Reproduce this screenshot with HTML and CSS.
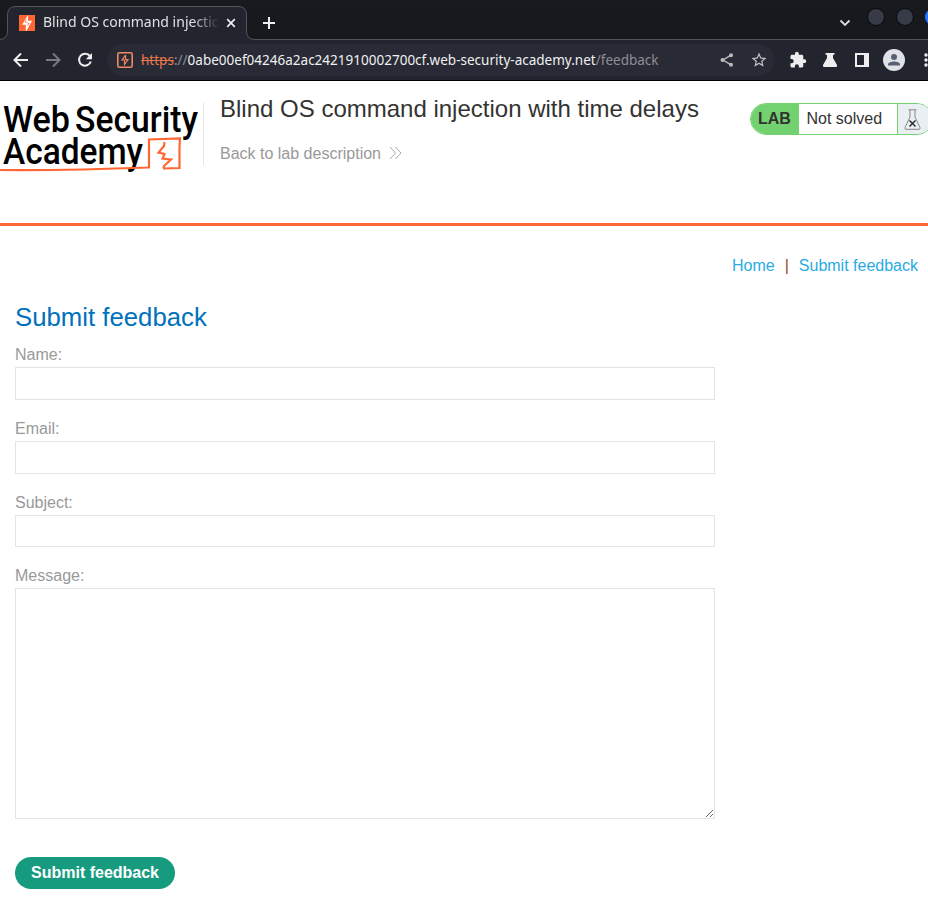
FILE: index.html
```html
<!DOCTYPE html>
<html lang="en">
<head>
<meta charset="utf-8">
<title>Blind OS command injection with time delays</title>
<link rel="stylesheet" href="styles.css">
</head>
<body>
<div class="browser">
  <div class="tabstrip">
    <svg class="tab-shape" width="928" height="41" viewBox="0 0 928 41"><path d="M-1 39.5Q7.500 39.500 7.500 31V15Q7.500 6.500 16 6.500H238Q246.500 6.500 246.500 15V31Q246.500 39.500 255 39.500H929V42H-1Z" fill="#23252e" stroke="#53555e"/></svg>
    <div class="tab">
      <svg width="16" height="16" viewBox="0 0 16 16"><path d="M0 0H16V16H0Z" fill="#ff6633"/><path d="M9 0V5.800H13L7.500 16H6.800V9.800H3.200Z" fill="#fff"/><path d="M7.400 3.500L5.800 7.400H9L8.600 11.500L10.500 8H7Z" fill="#ff6633"/></svg>
      <span class="tab-title">Blind OS command injectio</span>
      <svg class="tab-close" width="10" height="10" viewBox="0 0 10 10"><path d="M1.200 1.200L8.800 8.800M8.800 1.200L1.200 8.800" stroke="#eee" stroke-width="1.700"/></svg>
    </div>
    <svg class="new-tab" width="12" height="12" viewBox="0 0 12 12"><path d="M6 0V12M0 6H12" stroke="#eee" stroke-width="2"/></svg>
    <svg class="chevron" width="12" height="8" viewBox="0 0 12 8"><path d="M1.500 1.500L6 6L10.500 1.500" fill="none" stroke="#ddd" stroke-width="1.800"/></svg>
    <i class="win"></i><i class="win"></i><i class="win close"></i>
  </div>
  <div class="toolbar">
    <svg class="nav" width="16" height="16" viewBox="0 0 16 16"><path d="M15 8H2M8 1.500L1.500 8L8 14.500" fill="none" stroke="#eee" stroke-width="2"/></svg>
    <svg class="nav" width="16" height="16" viewBox="0 0 16 16"><path d="M1 8H14M8 1.500L14.500 8L8 14.500" fill="none" stroke="#777982" stroke-width="2"/></svg>
    <svg class="nav" width="16" height="16" viewBox="0 0 16 16"><path d="M13 4.200A6 6 0 1 0 13.800 9.500" fill="none" stroke="#eee" stroke-width="2"/><path d="M15 1V7.200H8.800Z" fill="#eee"/></svg>
    <div class="address">
      <svg width="16" height="16" viewBox="0 0 16 16" fill="none" stroke="#ee8963"><rect x=".8" y=".8" width="14.400" height="14.400" rx="1.500" stroke-width="1.600"/><path d="M8.500 3V7.500M8.500 3L5 8H7.500V12.500L11 7.700H8.500" stroke-width="1.200"/></svg>
      <span class="url"><s>https</s>://<b>0abe00ef04246a2ac2421910002700cf.web-security-academy.net</b>/feedback</span>
      <svg class="share" width="14" height="14" viewBox="0 0 14 14"><path d="M11 2.200L3 7L11 11.800" fill="none" stroke="#bbb" stroke-width="1.400"/><g fill="#bbb"><circle cx="11" cy="2.200" r="2"/><circle cx="2.500" cy="7" r="2"/><circle cx="11" cy="11.800" r="2"/></g></svg>
      <svg class="star" width="18" height="18" viewBox="0 0 24 24"><path fill="#c4c4c4" d="M22 9.240l-7.190-.62L12 2 9.190 8.630 2 9.240l5.460 4.730L5.820 21 12 17.270 18.180 21l-1.630-7.030L22 9.240zM12 15.400l-3.760 2.270 1-4.280-3.320-2.880 4.380-.38L12 6.100l1.710 4.040 4.380.38-3.320 2.880 1 4.280L12 15.400z"/></svg>
    </div>
    <svg class="puzzle" width="18" height="18" viewBox="0 0 24 24"><path fill="#eee" d="M20.500 11H19V7c0-1.100-.9-2-2-2h-4V3.500a2.500 2.500 0 0 0-5 0V5H4c-1.100 0-2 .9-2 2v3.800h1.500c1.500 0 2.700 1.200 2.700 2.700S5 16.200 3.500 16.200H2V20c0 1.100.9 2 2 2h3.800v-1.500c0-1.500 1.200-2.700 2.700-2.700s2.700 1.200 2.700 2.700V22H17c1.100 0 2-.9 2-2v-4h1.500a2.500 2.500 0 0 0 0-5z"/></svg>
    <svg class="flask" width="16" height="16" viewBox="0 0 16 16"><path d="M3.500 1H12.500V2.700H11V6L15 13Q15.500 15 14 15H2Q.5 15 1 13L5 6V2.700H3.500Z" fill="#eee"/></svg>
    <svg class="panel" width="14" height="14" viewBox="0 0 14 14"><path d="M0 0H14V14H0ZM2 2V12H9V2Z" fill="#eee" fill-rule="evenodd"/></svg>
    <svg class="avatar" width="22" height="22" viewBox="0 0 22 22"><circle cx="11" cy="11" r="11" fill="#dee1e6"/><circle cx="11" cy="8" r="3" fill="#566074"/><path d="M5 16.500V15.500C5 11.500 17 11.500 17 15.500V16.500Z" fill="#566074"/></svg>
    <svg class="dots" width="4" height="14" viewBox="0 0 4 14" fill="#eee"><circle cx="2" cy="2" r="1.700"/><circle cx="2" cy="7" r="1.700"/><circle cx="2" cy="12" r="1.700"/></svg>
  </div>
</div>

<header class="lab-header">
  <svg class="logo" width="203" height="92" viewBox="0 0 203 92">
    <g class="logo-text"><text x="3" y="41" textLength="67" lengthAdjust="spacingAndGlyphs">Web</text><text x="75" y="41" textLength="123" lengthAdjust="spacingAndGlyphs">Security</text><text x="3" y="73" textLength="140" lengthAdjust="spacingAndGlyphs">Academy</text></g>
    <g fill="none" stroke="#ff6633"><path d="M0 79Q70 79.500 149 76.500L149 48.500L180 47.500L179.500 56L179.500 77L163 77.500" stroke-width="2.200"/><path d="M164.500 51L164 55L158.500 61.500L164.500 63L162.500 67.500L171 68.500L164 75L163.500 77" stroke-width="2.200"/></g>
  </svg>
  <div class="title-block">
    <h2>Blind OS command injection with time delays</h2>
    <a class="back">Back to lab description<svg width="13" height="14" viewBox="0 0 13 14"><path d="M1 1L6.500 7L1 13M6.500 1L12 7L6.500 13" fill="none" stroke="#aaa"/></svg></a>
  </div>
  <div class="lab-status">
    <span class="lab">LAB</span><span class="state">Not solved</span>
    <span class="lab-flask"><svg width="17" height="21" viewBox="0 0 17 21" fill="none"><path d="M4.500 .8H12.500M6 1V8L1 18.500Q.5 20.300 2 20.300H15Q16.500 20.300 16 18.500L11 8V1" stroke="#888"/><path d="M5.500 11.500L11.500 17.500M11.500 11.500L5.500 17.500" stroke="#222" stroke-width="1.400"/></svg></span>
  </div>
</header>

<main>
  <nav class="top-links"><a>Home</a><span>|</span><a>Submit feedback</a></nav>
  <h1>Submit feedback</h1>
  <form>
    <label for="name">Name:</label><input id="name" type="text">
    <label for="email">Email:</label><input id="email" type="text">
    <label for="subject">Subject:</label><input id="subject" class="short" type="text">
    <label for="message">Message:</label><textarea id="message"></textarea>
    <button type="button">Submit feedback</button>
  </form>
</main>
</body>
</html>
```
FILE: styles.css
```css
* { box-sizing: border-box; }
html { overflow: hidden; }
body { margin: 0; height: 914px; overflow: hidden; background: #fff; color: #333332; font: 16px/20px "Liberation Sans", Arial, sans-serif; }
svg { display: block; flex: none; }

.browser { height: 81px; background: #23252e; border-bottom: 1px solid #000; font-family: "Noto Sans", sans-serif; overflow: hidden; }
.tabstrip { position: relative; display: flex; height: 40px; background: linear-gradient(#191a20, #17181c); }
.tab-shape { position: absolute; left: 0; top: 0; }
.tab { position: relative; display: flex; align-items: center; width: 240px; height: 32px; margin: 7px 0 0 7px; padding-left: 12px; }
.tab-title { width: 177px; margin: -2px 0 0 8px; overflow: hidden; white-space: nowrap; color: #e0e0e2; font-size: 14px; -webkit-mask-image: linear-gradient(90deg, #000 150px, transparent 176px); mask-image: linear-gradient(90deg, #000 150px, transparent 176px); }
.tab-close { margin-left: 6px; }
.new-tab { position: relative; margin: 17px 0 0 16px; }
.chevron { margin: 19px 14px 0 auto; }
.win { flex: none; width: 18px; height: 18px; margin: 8px 11px 0 0; border: 1px solid #08090c; border-radius: 50%; background: #373b47; }
.chevron + .win { margin-left: 2px; }
.win.close { margin-right: -15px; background: #2777ff; border-color: #2777ff; }

.toolbar { display: flex; align-items: center; height: 40px; padding-left: 13px; }
.nav { margin-right: 16px; }
.address { display: flex; align-items: center; width: 670px; height: 32px; margin-left: -2px; padding-left: 10px; border-radius: 16px; background: #282a35; }
.url { width: 579px; margin-left: 8px; color: #8e8f95; font-size: 13.53px; white-space: nowrap; }
.url s { color: #e9774e; }
.url b { color: #f0f0f0; font-weight: 400; }
.star { margin-left: 16px; }
.puzzle { margin-left: 15px; }
.flask { margin-left: 15px; }
.panel { margin-left: 17px; }
.avatar { margin-left: 14px; }
.dots { margin-left: 19px; }

.lab-header { display: flex; height: 145px; border-bottom: 3px solid #ff6633; }
.logo { margin-top: 10px; }
.logo-text { font: 500 36px Roboto, sans-serif; fill: #000; }
.title-block { flex: none; width: 546px; height: 62px; margin-top: 22px; padding-left: 16px; border-left: 1px solid #e4e4e4; }
h2 { margin: -9px 0 0; font-size: 24px; line-height: 30px; font-weight: 400; white-space: nowrap; }
.back { display: flex; align-items: center; margin-top: 20px; color: #999; }
.back svg { margin: -2px 0 0 8px; }
.lab-status { display: flex; flex: none; width: 183px; height: 32px; margin: 22px 0 0 1px; border: 1px solid #72d26f; border-radius: 16px; overflow: hidden; line-height: 30px; }
.lab { width: 48px; padding-left: 7px; background: #72d26f; font-weight: 700; }
.state { width: 98px; padding-left: 7.500px; }
.lab-flask { flex: 1; padding: 5px 0 0 6px; border-left: 1px solid #72d26f; background: #eaeff3; }

main { padding: 30px 15px 0; }
.top-links { display: flex; justify-content: flex-end; gap: 10px; margin-right: -5px; color: #8f4a28; }
.top-links a { color: #29abe2; }
h1 { margin: 26px 0 0; color: #0071bc; font-size: 25.75px; line-height: 30px; font-weight: 400; }
form { display: flex; flex-direction: column; align-items: flex-start; margin-top: 13px; }
label { height: 20px; margin-bottom: 2px; color: #999; }
input { width: 700px; height: 33px; margin: 0 0 19px; border: 1px solid #e4e4e4; outline: none; }
input.short { height: 32px; }
textarea { width: 700px; height: 231px; margin: 0; border: 1px solid #e4e4e4; outline: none; }
button { width: 160px; height: 32px; margin: 38px 0 0; padding: 0; border: 0; border-radius: 16px; background: #179b7f; color: #fff; font: 700 16px "Liberation Sans", Arial, sans-serif; }
```
